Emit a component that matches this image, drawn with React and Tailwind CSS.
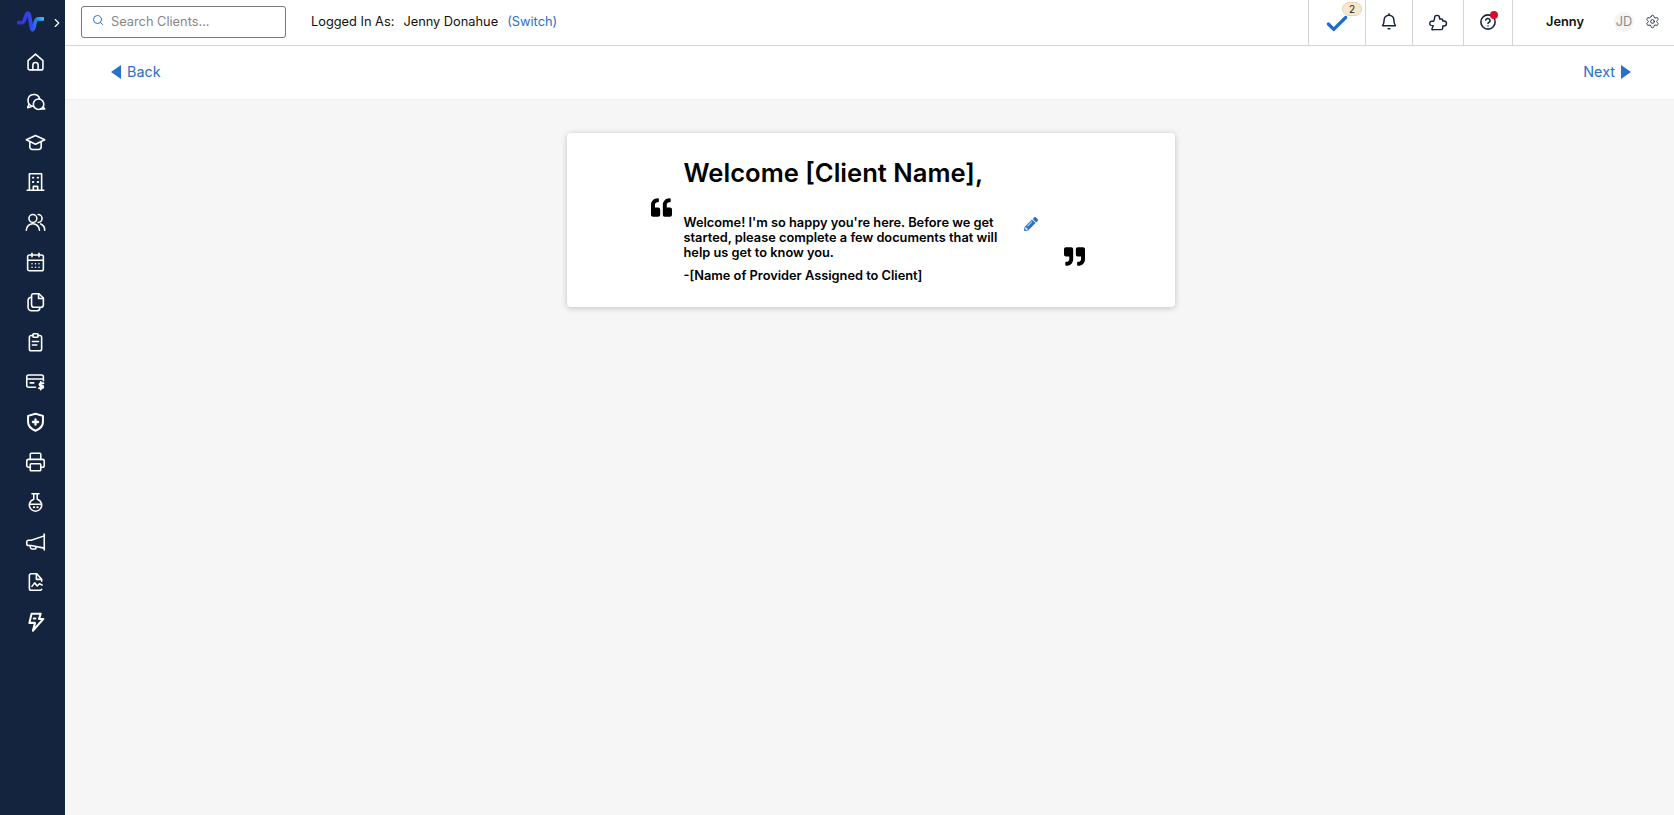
import React from 'react';
import { CalendarDays, Printer, ChevronRight, Search, Settings, Check } from 'lucide-react';
import { FaQuoteLeft, FaQuoteRight, FaPencilAlt } from 'react-icons/fa';

const Svg = ({ children, ...props }) => (
  <svg viewBox="0 0 24 24" fill="none" stroke="currentColor" strokeWidth="1.8" strokeLinecap="round" strokeLinejoin="round" {...props}>
    {children}
  </svg>
);

const HomeIcon = (props) => (
  <Svg {...props}>
    <path d="M3.500 10.500 12 3l8.500 7.500V19a2 2 0 0 1-2 2h-13a2 2 0 0 1-2-2Z" />
    <path d="M9 21v-5.500a3 3 0 0 1 6 0V21" />
  </Svg>
);

const ChatsIcon = (props) => (
  <Svg {...props}>
    <path d="M8.500 16.800a6.800 6.800 0 1 1 8.300-8.300" />
    <path d="M4.500 14.500 3 18.500l4-1" />
    <circle cx="15.500" cy="14.500" r="6" />
    <path d="M18 20h4.500l-1.500-2" />
  </Svg>
);

const CapIcon = (props) => (
  <Svg {...props}>
    <path d="M1.500 9.500 12 4.500l10.500 5L12 14.500Z" />
    <path d="M5.500 12v5.500a3 3 0 0 0 3 3h7a3 3 0 0 0 3-3V12" />
  </Svg>
);

const BuildingIcon = (props) => (
  <Svg {...props}>
    <path d="M5 21.500V2.500h14v19" />
    <path d="M2.500 21.500h19" />
    <path d="M9.500 21.500V17h5v4.500" />
    <path d="M9 7h.5M14.500 7h.5M9 12h.5M14.500 12h.5" strokeWidth="2.200" />
  </Svg>
);

const UsersIcon = (props) => (
  <Svg {...props}>
    <circle cx="9" cy="8" r="4.500" />
    <path d="M1.500 21.500a7.500 7.500 0 0 1 15 0" />
    <path d="M15 3.500a4.500 4.500 0 0 1 0 9" />
    <path d="M18 14.200a7.500 7.500 0 0 1 4.500 7.300" />
  </Svg>
);

const FilesIcon = (props) => (
  <Svg {...props}>
    <path d="M10.500 2.500H16l5 5V15a3 3 0 0 1-3 3h-7.500a3 3 0 0 1-3-3V4.500a2 2 0 0 1 2-2Z" />
    <path d="M15.500 2.500V8H21" />
    <path d="M7.500 6.500A4 4 0 0 0 3.500 10v8a4 4 0 0 0 4 4H14a3.500 3.500 0 0 0 3-3.500" />
  </Svg>
);

const ClipboardIcon = (props) => (
  <Svg {...props}>
    <path d="M9 4.500H7a2 2 0 0 0-2 2V20a2 2 0 0 0 2 2h10a2 2 0 0 0 2-2V6.500a2 2 0 0 0-2-2h-2" />
    <rect x="9" y="2.500" width="6" height="4" rx="1" />
    <path d="M8.500 11.500h7M8.500 15.500h5" />
  </Svg>
);

const BillingIcon = (props) => (
  <Svg {...props}>
    <path d="M12 18H4a2 2 0 0 1-2-2V6a2 2 0 0 1 2-2h15a2 2 0 0 1 2 2v4.500" />
    <path d="M2 8.500h19" />
    <path d="M6 13h4" />
    <path d="M21 13.500h-3a1.300 1.300 0 0 0 0 2.800h1.500a1.300 1.300 0 0 1 0 2.700H16M18 12v8.500" strokeWidth="2.200" />
  </Svg>
);

const ShieldIcon = (props) => (
  <Svg {...props} strokeWidth="2.300">
    <path d="M12 2.500 20.500 5v7c0 5-3.500 8-8.500 10-5-2-8.500-5-8.500-10V5Z" />
    <path d="M12 9v6M9 12h6" strokeWidth="2.600" />
  </Svg>
);

const FlaskIcon = (props) => (
  <Svg {...props}>
    <path d="M8 2.500h8" />
    <path d="M10 2.500v6.300a7 7 0 1 0 4 0V2.500" />
    <path d="M5.500 14.500h13" />
    <path d="M10 18h.5M14 18h.5" strokeWidth="2.200" />
  </Svg>
);

const MegaphoneIcon = (props) => (
  <Svg {...props}>
    <path d="M22 3v18" />
    <path d="M22 5 7 10H4a2 2 0 0 0-2 2v2a2 2 0 0 0 2 2h3l15 3" />
    <path d="M5.500 16l1 3a1.500 1.500 0 0 0 1.500 1h3a1.500 1.500 0 0 0 1.500-2" />
  </Svg>
);

const ReportIcon = (props) => (
  <Svg {...props}>
    <path d="M19 11V9l-5.500-6.500H7a2 2 0 0 0-2 2V19.500a2 2 0 0 0 2 2h10a2 2 0 0 0 2-1" />
    <path d="M13 2.500V9h6" />
    <path d="M8 17l3-4 3 3.500 2.500-2.500 3 1.500" />
  </Svg>
);

const ZapIcon = (props) => (
  <Svg {...props} strokeWidth="2.300">
    <path d="M7.500 2.500h10.500l-2 6h5L9 22l2.500-9H5Z" />
    <path d="M10 8h2" />
  </Svg>
);

const BellIcon = (props) => (
  <Svg {...props} strokeWidth="2">
    <path d="M12 3.500a6.500 6.500 0 0 0-6.500 6.500c0 4.500-1 6-2 7.500h17c-1-1.500-2-3-2-7.500A6.500 6.500 0 0 0 12 3.500Z" />
    <path d="M12 1.500v2M10.800 21.500h2.400" />
  </Svg>
);

const PuzzleIcon = (props) => (
  <Svg {...props} strokeWidth="1.800">
    <path d="M6 21h10a2 2 0 0 0 2-2v-2.500h1.500a3.200 3.200 0 0 0 0-6.400H18V9a1.500 1.500 0 0 0-1.500-1.500H14V6.200a3.200 3.200 0 0 0-6.400 0v1.300L6.500 10.500H4.200A2.700 2.700 0 0 0 3 15.600l3 .4-1.500 3.500A1 1 0 0 0 6 21Z" />
  </Svg>
);

const HelpIcon = (props) => (
  <Svg {...props} strokeWidth="2.100">
    <circle cx="12" cy="12" r="9.500" />
    <path d="M9 9.300a3 3 0 0 1 5.800 1c0 2-2.800 2.400-2.800 3.700" />
    <path d="M12 17.300h.01" />
  </Svg>
);

const navIcons = [
  HomeIcon, ChatsIcon, CapIcon, BuildingIcon, UsersIcon, CalendarDays, FilesIcon, ClipboardIcon,
  BillingIcon, ShieldIcon, Printer, FlaskIcon, MegaphoneIcon, ReportIcon, ZapIcon,
];

const Logo = () => (
  <svg viewBox="0 0 26 20" className="w-[27px] h-[21px] mb-[3px]" fill="none">
    <defs>
      <linearGradient id="logoGrad" x1="0" y1="0" x2="1" y2="0">
        <stop offset="0" stopColor="#3f2bd8" />
        <stop offset="0.55" stopColor="#2f4cf0" />
        <stop offset="1" stopColor="#25c8ee" />
      </linearGradient>
    </defs>
    <path d="M1.500 11H5C8 11 8 2 10.500 2S13 18 15 18s1.500-10.500 5-10.500h5" stroke="url(#logoGrad)" strokeWidth="3.600" strokeLinecap="round" strokeLinejoin="round" />
  </svg>
);

const Sidebar = () => (
  <aside className="w-[65px] shrink-0 bg-[#14243f] flex flex-col items-center text-white">
    <div className="h-[45px] w-full flex items-center pl-[17px] gap-[6px]">
      <Logo />
      <ChevronRight className="w-[14px] h-[14px]" strokeWidth={2} />
    </div>
    <nav className="flex flex-col items-center gap-[18px] pt-[6px] pl-[6px] w-full">
      {navIcons.map((Icon, i) => (
        <a key={i} className="block w-[21px] h-[22px]">
          <Icon className="w-[21px] h-[22px]" strokeWidth={1.8} />
        </a>
      ))}
    </nav>
  </aside>
);

const TopBar = () => (
  <header className="h-[46px] shrink-0 flex items-stretch bg-white border-b border-[#d4d4d4]">
    <div className="flex items-center pl-[16px] pb-[2px]">
      <div className="w-[205px] h-[32px] border border-[#77777f] rounded-[3px] flex items-center pl-[10px] gap-[7px]">
        <Search className="w-[12px] h-[12px] text-[#2a6fc9] mb-[3px]" strokeWidth={2} />
        <span className="text-[12.8px] text-[#85858a]">Search Clients...</span>
      </div>
    </div>
    <div className="flex items-center pl-[25px] pb-[1px] text-[12.8px] text-[#111]">
      <span>Logged In As:</span>
      <span className="ml-[9px]">Jenny Donahue</span>
      <a className="ml-[9px] text-[#2a6fc9]">(Switch)</a>
    </div>
    <div className="ml-auto flex items-stretch">
      <div className="relative w-[57px] border-l border-[#d4d4d4] flex items-center justify-center">
        <Check className="w-[26px] h-[26px] text-[#1f6cc7] mt-[2px]" strokeWidth={3} />
        <span className="absolute top-[2px] right-[3px] w-[20px] h-[14px] rounded-full bg-[#fae6c8] border border-[#e5d5b8] text-[10px] leading-[12px] text-center text-[#222]">2</span>
      </div>
      <div className="w-[47px] border-l border-[#d4d4d4] flex items-center justify-center pb-[2px]">
        <BellIcon className="w-[18px] h-[19px] text-[#14243f]" />
      </div>
      <div className="w-[51px] border-l border-[#d4d4d4] flex items-center justify-center pb-[1px] pr-[1px]">
        <PuzzleIcon className="w-[20px] h-[19px] text-[#14243f]" />
      </div>
      <div className="relative w-[49px] border-l border-[#d4d4d4] flex items-center justify-center pb-[2px]">
        <HelpIcon className="w-[18px] h-[18px] text-[#14243f]" />
        <span className="absolute top-[11px] right-[14px] w-[8px] h-[8px] rounded-full bg-[#d0112b]" />
      </div>
      <div className="w-[162px] border-l border-[#d4d4d4] flex items-center pb-[2px]">
        <span className="ml-[33px] text-[12.8px] font-semibold text-[#111]">Jenny</span>
        <span className="ml-[30px] w-[20px] h-[20px] rounded-full bg-[#f4f4f4] text-[12.8px] text-[#8b8b8b] flex items-center justify-center">JD</span>
        <Settings className="ml-[11px] w-[15px] h-[15px] text-[#14243f]" strokeWidth={1.4} />
      </div>
    </div>
  </header>
);

const SubBar = () => (
  <div className="h-[53px] shrink-0 bg-white flex items-center justify-between pl-[46px] pr-[43px] pb-[1px] text-[14.4px] text-[#2a6fc9]">
    <a className="flex items-center gap-[6px]">
      <svg viewBox="0 0 10 14" className="w-[10px] h-[14px]" fill="currentColor"><path d="M10 0v14L0 7Z" /></svg>
      Back
    </a>
    <a className="flex items-center gap-[6px]">
      Next
      <svg viewBox="0 0 10 14" className="w-[10px] h-[14px]" fill="currentColor"><path d="M0 0v14l10-7Z" /></svg>
    </a>
  </div>
);

const WelcomeCard = () => (
  <div className="w-[608px] h-[174px] bg-white rounded-[4px] shadow-[0_1px_6px_rgba(0,0,0,0.22)] flex pl-[82px] text-black">
    <FaQuoteLeft className="w-[25px] h-[21px] mt-[64px] shrink-0" />
    <div className="ml-[10px] w-[320px] shrink-0">
      <h1 className="mt-[25px] text-[25.6px] leading-[30px] font-semibold whitespace-nowrap">Welcome [Client Name],</h1>
      <p className="mt-[27px] text-[12.8px] leading-[15px] font-semibold">
        Welcome! I'm so happy you're here. Before we get started, please complete a few documents that will help us get to know you.
      </p>
      <p className="mt-[8px] text-[12.8px] leading-[15px] font-semibold whitespace-nowrap">-[Name of Provider Assigned to Client]</p>
    </div>
    <FaPencilAlt className="w-[14px] h-[14px] mt-[84px] ml-[20px] shrink-0 text-[#2a6fc9]" />
    <FaQuoteRight className="w-[25px] h-[21px] mt-[113px] ml-[24px] shrink-0" />
  </div>
);

export default function App() {
  return (
    <div className="h-[815px] flex overflow-hidden bg-[#f6f6f6] [font-family:Inter,'Liberation_Sans',sans-serif]">
      <Sidebar />
      <main className="flex-1 flex flex-col min-w-0">
        <TopBar />
        <SubBar />
        <div className="h-px bg-[#efefef]" />
        <div className="flex justify-center pt-[33px]">
          <div className="ml-[2px]">
            <WelcomeCard />
          </div>
        </div>
      </main>
    </div>
  );
}
